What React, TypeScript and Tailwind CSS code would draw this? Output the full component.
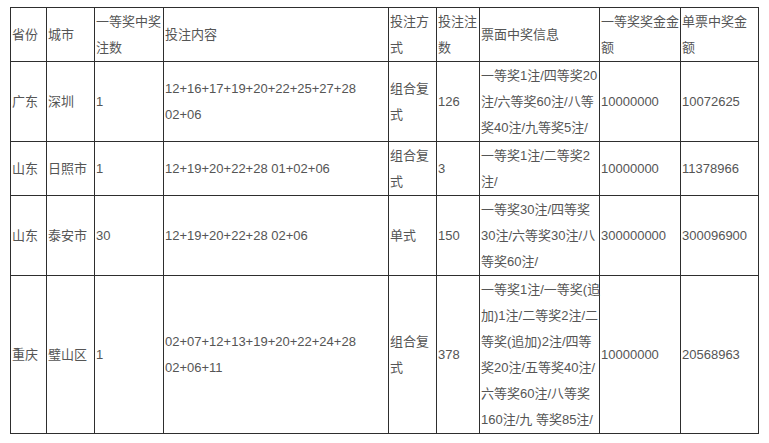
type Row = {
  province: string;
  city: string;
  count: string;
  numbers: string[];
  mode: string[];
  bets: string;
  info: string[];
  prize: string;
  total: string;
};

const ROWS: Row[] = [
  {
    province: "广东",
    city: "深圳",
    count: "1",
    numbers: ["12+16+17+19+20+22+25+27+28", "02+06"],
    mode: ["组合复", "式"],
    bets: "126",
    info: ["一等奖1注/四等奖20", "注/六等奖60注/八等", "奖40注/九等奖5注/"],
    prize: "10000000",
    total: "10072625",
  },
  {
    province: "山东",
    city: "日照市",
    count: "1",
    numbers: ["12+19+20+22+28 01+02+06"],
    mode: ["组合复", "式"],
    bets: "3",
    info: ["一等奖1注/二等奖2", "注/"],
    prize: "10000000",
    total: "11378966",
  },
  {
    province: "山东",
    city: "泰安市",
    count: "30",
    numbers: ["12+19+20+22+28 02+06"],
    mode: ["单式"],
    bets: "150",
    info: ["一等奖30注/四等奖", "30注/六等奖30注/八", "等奖60注/"],
    prize: "300000000",
    total: "300096900",
  },
  {
    province: "重庆",
    city: "璧山区",
    count: "1",
    numbers: ["02+07+12+13+19+20+22+24+28", "02+06+11"],
    mode: ["组合复", "式"],
    bets: "378",
    info: [
      "一等奖1注/一等奖(追",
      "加)1注/二等奖2注/二",
      "等奖(追加)2注/四等",
      "奖20注/五等奖40注/",
      "六等奖60注/八等奖",
      "160注/九 等奖85注/",
    ],
    prize: "10000000",
    total: "20568963",
  },
];

const HEAD: string[][] = [
  ["省份"],
  ["城市"],
  ["一等奖中奖", "注数"],
  ["投注内容"],
  ["投注方", "式"],
  ["投注注", "数"],
  ["票面中奖信息"],
  ["一等奖奖金金", "额"],
  ["单票中奖金", "额"],
];

// 列宽（含边框）按截图量出来的
const WIDTHS = [36, 48, 69, 225, 48, 43, 120, 81, 78];

const cell =
  "border border-[#2e2e2e] px-[1px] pt-[1px] pb-0 align-middle text-left whitespace-nowrap";

function Lines({ lines }: { lines: string[] }) {
  return (
    <>
      {lines.map((l, i) => (
        <span key={i} className="block">
          {l}
        </span>
      ))}
    </>
  );
}

export default function App() {
  return (
    <div className="min-h-screen bg-white pt-[7px] pl-[10px]">
      <table
        className="table-fixed border-collapse text-[13px] leading-[26px] text-[#555]"
        style={{ fontFamily: '"Liberation Sans", "Noto Sans CJK SC", sans-serif', width: 749 }}
      >
        <colgroup>
          {WIDTHS.map((w, i) => (
            <col key={i} style={{ width: w }} />
          ))}
        </colgroup>
        <tbody>
          <tr>
            {HEAD.map((h, i) => (
              <td key={i} className={cell}>
                <Lines lines={h} />
              </td>
            ))}
          </tr>
          {ROWS.map((r, i) => (
            <tr key={i}>
              <td className={cell}>{r.province}</td>
              <td className={cell}>{r.city}</td>
              <td className={cell}>{r.count}</td>
              <td className={cell}>
                <Lines lines={r.numbers} />
              </td>
              <td className={cell}>
                <Lines lines={r.mode} />
              </td>
              <td className={cell}>{r.bets}</td>
              <td className={cell}>
                <Lines lines={r.info} />
              </td>
              <td className={cell}>{r.prize}</td>
              <td className={cell}>{r.total}</td>
            </tr>
          ))}
        </tbody>
      </table>
    </div>
  );
}
